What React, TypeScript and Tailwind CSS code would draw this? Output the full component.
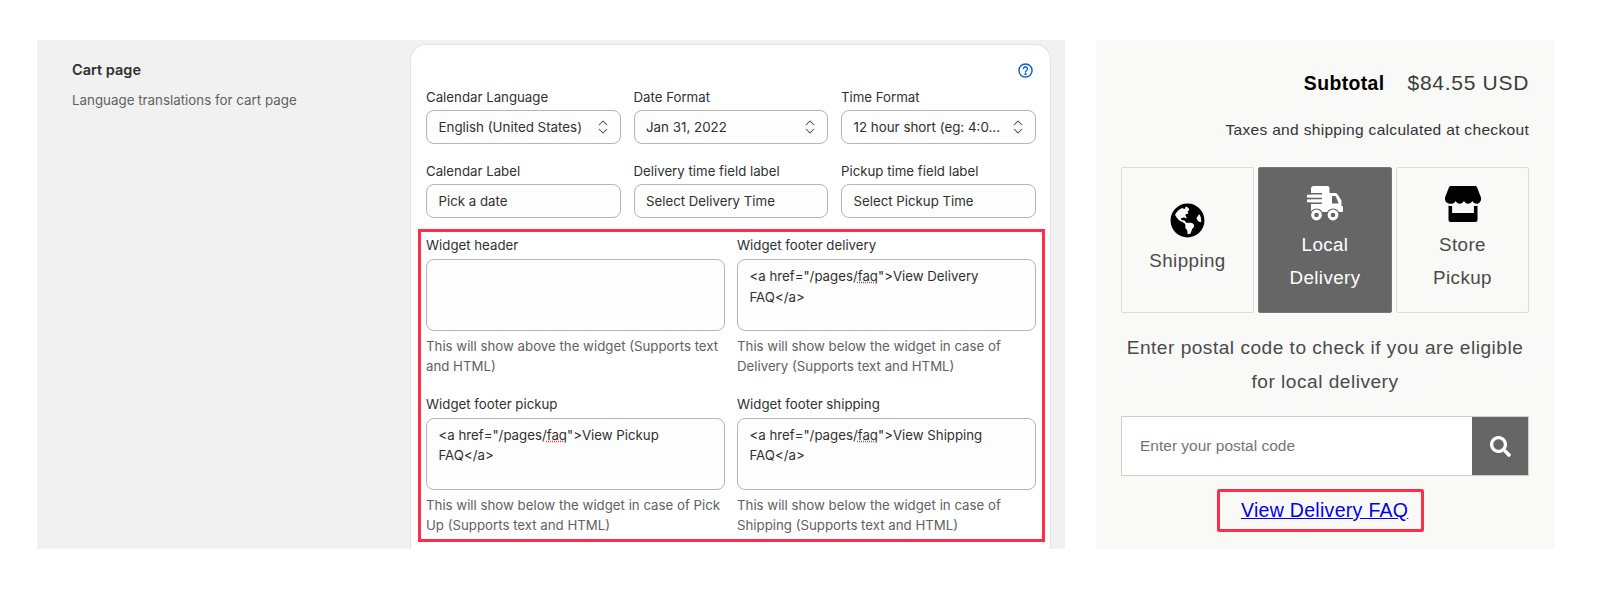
import { FaGlobeAmericas, FaSearch } from "react-icons/fa";
import { ChevronsUpDown } from "lucide-react";

const inter = { fontFamily: "Inter, sans-serif" };

function Select({ label, value }: { label: string; value: string }) {
  return (
    <div>
      <div className="mb-[5px] h-[16px] text-[13.25px] leading-[16px] text-[#303030]">{label}</div>
      <div className="flex h-[34px] items-center justify-between rounded-lg border border-[#b5b5b5] bg-[#fdfdfd] pl-[11.5px] pr-[8px] text-[13.35px] text-[#303030]">
        <span className="pt-px">{value}</span>
        <ChevronsUpDown size={18} strokeWidth={1.4} className="text-[#4a4a4a]" />
      </div>
    </div>
  );
}

function TextInput({ label, value }: { label: string; value: string }) {
  return (
    <div>
      <div className="mb-[5px] h-[16px] text-[13.25px] leading-[16px] text-[#303030]">{label}</div>
      <div className="flex h-[34px] items-center rounded-lg border border-[#b5b5b5] bg-[#fdfdfd] pl-[11.5px] pr-3 pt-px text-[13.25px] text-[#303030]">
        {value}
      </div>
    </div>
  );
}

function TextArea({ label, name, help }: { label: string; name?: string; help: string }) {
  return (
    <div>
      <div className="mb-[6px] h-[16px] text-[13.25px] leading-[16px] text-[#303030]">{label}</div>
      <div className="h-[72px] rounded-lg border border-[#b5b5b5] bg-[#fdfdfd] pl-[11.5px] pr-3 pt-[6px] text-[13.25px] leading-[20.5px] text-[#303030]">
        {name ? (
          <>
            {'<a href="/pages/'}
            <span className="underline decoration-[#e04040] decoration-dotted">faq</span>
            {'">View ' + name}
            <br />
            {"FAQ</a>"}
          </>
        ) : null}
      </div>
      <p className="mt-[5px] text-[13.25px] leading-[20.4px] text-[#616161]">{help}</p>
    </div>
  );
}

function TruckIcon() {
  return (
    <svg width="36" height="36" viewBox="0 0 36 36">
      <path
        fill="#fff"
        d="M7 0h13.5a2 2 0 0 1 2 2v5h6a2 2 0 0 1 1.6.8l3.6 5.4c.5.7.8 1.5.8 2.4V20h.5a1 1 0 0 1 1 1v4a1 1 0 0 1-1 1H4V2a3 3 0 0 1 3-2z"
      />
      <path fill="#fff" d="M0 8.4h6v3.4H0zM0 13.2h6v3.4H0z" />
      <path fill="#666666" d="M0 7h15v1.4H0zM0 11.8h15v1.4H0zM0 16.6h15V18H0z" />
      <path fill="#666666" d="M25 10h3.6l3.2 7.5H25z" />
      <circle cx="9.5" cy="29" r="6.6" fill="#666666" />
      <circle cx="26" cy="29" r="6.6" fill="#666666" />
      <circle cx="9.5" cy="29" r="5.4" fill="#fff" />
      <circle cx="26" cy="29" r="5.4" fill="#fff" />
      <circle cx="9.5" cy="29" r="2.3" fill="#666666" />
      <circle cx="26" cy="29" r="2.3" fill="#666666" />
    </svg>
  );
}

function StoreIcon() {
  return (
    <svg width="36" height="36" viewBox="0 0 36 36">
      <path
        fill="#000"
        d="M6 0h24c1 0 1.8.6 2.1 1.4L36 11.5v1.7c0 2.6-2.1 4.6-4.5 4.6-1.8 0-3.5-1.1-4.2-2.7-.7 1.6-2.3 2.7-4.2 2.7s-3.4-1.1-4.1-2.7h-.1c-.7 1.6-2.3 2.7-4.1 2.7s-3.4-1.1-4.1-2.7c-.7 1.6-2.4 2.7-4.2 2.7C2.1 17.8 0 15.8 0 13.2v-1.7L3.9 1.4C4.2.6 5 0 6 0z"
      />
      <path
        fill="#000"
        d="M3.5 19.5c1.1.5 2.4.6 3.6.4V27h21.8v-7.1c1.2.2 2.5.1 3.6-.4V34a2 2 0 0 1-2 2H5.5a2 2 0 0 1-2-2z"
      />
    </svg>
  );
}

function MethodCard({
  icon,
  lines,
  active,
}: {
  icon: React.ReactNode;
  lines: string[];
  active?: boolean;
}) {
  return (
    <div
      className={
        active
          ? "flex flex-col items-center justify-center rounded-[2px] border border-[#777777] bg-[#666666] text-white"
          : "flex flex-col items-center justify-center rounded-[2px] border border-[#dcdcdc] text-[#4a4a4a]"
      }
    >
      {icon}
      <div className="mt-[6px] text-center text-[18.8px] leading-[33px] tracking-[0.4px]">
        {lines.map((l) => (
          <div key={l}>{l}</div>
        ))}
      </div>
    </div>
  );
}

export default function App() {
  return (
    <div className="flex h-[601px] w-[1600px] items-start bg-white pl-[37px] pt-[40px]">
      {/* admin settings */}
      <div className="flex h-[509px] w-[1028px] overflow-hidden bg-[#f1f1f1]" style={inter}>
        <div className="w-[373px] pl-[35px] pt-[22px]">
          <div className="text-[14.5px] font-semibold leading-[16px] text-[#303030]">Cart page</div>
          <div className="mt-[14px] text-[13.35px] leading-[16px] text-[#616161]">
            Language translations for cart page
          </div>
        </div>
        <div className="mt-[4px] h-[530px] w-[641px] rounded-t-2xl border border-b-0 border-[#e3e3e3] bg-white">
          <div className="flex justify-end pr-[17px] pt-[18px]">
            <svg width="15" height="15" viewBox="0 0 16 16" fill="none" stroke="#0a5fd6" strokeWidth="1.5">
              <circle cx="8" cy="8" r="7" />
              <path d="M5.9 6.2a2.1 2.1 0 1 1 3.2 1.8c-.7.45-1.1.8-1.1 1.6" strokeLinecap="round" />
              <circle cx="8" cy="11.8" r="0.5" fill="#0a5fd6" />
            </svg>
          </div>
          <div className="mt-[11px] grid grid-cols-[194.5px_194.5px_194.5px] gap-x-[13px] gap-y-[19px] pl-[15px]">
            <Select label="Calendar Language" value="English (United States)" />
            <Select label="Date Format" value="Jan 31, 2022" />
            <Select label="Time Format" value="12 hour short (eg: 4:0..." />
            <TextInput label="Calendar Label" value="Pick a date" />
            <TextInput label="Delivery time field label" value="Select Delivery Time" />
            <TextInput label="Pickup time field label" value="Select Pickup Time" />
          </div>
          <div className="ml-[7px] mt-[11px] grid h-[313px] w-[627px] grid-cols-[298.5px_298.5px] content-start gap-x-[12.5px] gap-y-[19px] border-[3px] border-[#ff2d46] pl-[5px] pt-[5px]">
            <TextArea label="Widget header" help="This will show above the widget (Supports text and HTML)" />
            <TextArea
              label="Widget footer delivery"
              name="Delivery"
              help="This will show below the widget in case of Delivery (Supports text and HTML)"
            />
            <TextArea
              label="Widget footer pickup"
              name="Pickup"
              help="This will show below the widget in case of Pick Up (Supports text and HTML)"
            />
            <TextArea
              label="Widget footer shipping"
              name="Shipping"
              help="This will show below the widget in case of Shipping (Supports text and HTML)"
            />
          </div>
        </div>
      </div>

      {/* storefront widget */}
      <div
        className="ml-[31px] h-[509px] w-[459px] bg-[#f9f9f7] pl-[25px] pr-[26px] pt-[29px]"
        style={{ fontFamily: '"Liberation Sans", Arial, sans-serif' }}
      >
        <div className="flex h-[28px] items-baseline justify-end gap-[23px] leading-[28px]">
          <span className="text-[19.4px] font-bold tracking-[0.4px] text-black">Subtotal</span>
          <span className="text-[21px] tracking-[0.7px] text-[#3d3d3d]">$84.55 USD</span>
        </div>
        <div className="mt-[23px] text-right text-[15.55px] leading-[20px] tracking-[0.3px] text-[#333333]">
          Taxes and shipping calculated at checkout
        </div>
        <div className="mt-[27px] grid h-[146px] grid-cols-[133px_134px_133px] gap-x-[4px]">
          <MethodCard icon={<FaGlobeAmericas size={35} className="text-black" />} lines={["Shipping"]} />
          <MethodCard icon={<TruckIcon />} lines={["Local", "Delivery"]} active />
          <MethodCard icon={<StoreIcon />} lines={["Store", "Pickup"]} />
        </div>
        <div className="mt-[18px] text-center text-[19.1px] leading-[33.5px] tracking-[0.5px] text-[#4a4a4a]">
          Enter postal code to check if you are eligible
          <br />
          for local delivery
        </div>
        <div className="mt-[18px] flex h-[60px] w-[408px] border border-[#cfcfcf] bg-white">
          <div className="flex flex-1 items-center pl-[18px] text-[15.5px] text-[#757575]">Enter your postal code</div>
          <div className="flex w-[56px] items-center justify-center bg-[#666666]">
            <FaSearch size={21} className="text-white" />
          </div>
        </div>
        <a
          href="#"
          className="ml-[96px] mt-[13px] block h-[43px] w-[207px] rounded-[2px] border-[3px] border-[#ff2d46] pl-[21px] text-[19.5px] leading-[37px] tracking-[0.3px] text-[#0000ee] underline"
        >
          View Delivery FAQ
        </a>
      </div>
    </div>
  );
}
